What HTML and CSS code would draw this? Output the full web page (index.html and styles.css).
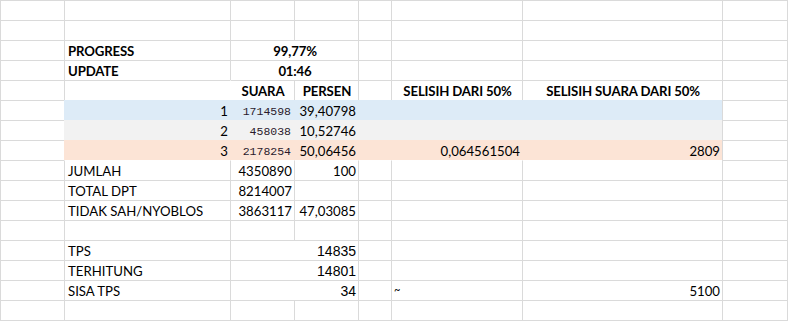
FILE: index.html
```html
<!DOCTYPE html>
<html>
<head>
<meta charset="utf-8">
<link rel="stylesheet" href="styles.css">
</head>
<body>
<div class="sheet">
  <!-- row 1 -->
  <div class="c"></div><div class="c"></div><div class="c"></div><div class="c"></div><div class="c"></div><div class="c"></div><div class="c"></div><div class="c"></div><div class="c z"></div>
  <!-- row 2 -->
  <div class="c"></div><div class="c"></div><div class="c"></div><div class="c"></div><div class="c"></div><div class="c"></div><div class="c"></div><div class="c"></div><div class="c z"></div>
  <!-- PROGRESS -->
  <div class="c"></div><div class="c b">PROGRESS</div><div class="c s2 b ctr">99,77%</div><div class="c"></div><div class="c"></div><div class="c"></div><div class="c"></div><div class="c z"></div>
  <!-- UPDATE -->
  <div class="c"></div><div class="c b">UPDATE</div><div class="c s2 b ctr">01:46</div><div class="c"></div><div class="c"></div><div class="c"></div><div class="c"></div><div class="c z"></div>
  <!-- headers -->
  <div class="c"></div><div class="c"></div><div class="c nl b ctr">SUARA</div><div class="c b ctr">PERSEN</div><div class="c"></div><div class="c b ctr">SELISIH DARI 50%</div><div class="c b ctr">SELISIH SUARA DARI 50%</div><div class="c"></div><div class="c z"></div>
  <!-- 1 -->
  <div class="c"></div><div class="c blue r">1</div><div class="c blue r mono">1714598</div><div class="c blue r">39,40798</div><div class="c blue"></div><div class="c blue"></div><div class="c blue"></div><div class="c"></div><div class="c z"></div>
  <!-- 2 -->
  <div class="c"></div><div class="c gray r">2</div><div class="c gray r mono">458038</div><div class="c gray r">10,52746</div><div class="c gray"></div><div class="c gray"></div><div class="c gray"></div><div class="c"></div><div class="c z"></div>
  <!-- 3 -->
  <div class="c"></div><div class="c peach r">3</div><div class="c peach r mono">2178254</div><div class="c peach r">50,06456</div><div class="c peach"></div><div class="c peach r">0,064561504</div><div class="c peach r">2809</div><div class="c"></div><div class="c z"></div>
  <!-- JUMLAH -->
  <div class="c"></div><div class="c nt">JUMLAH</div><div class="c nt r">4350890</div><div class="c nt r">100</div><div class="c nt"></div><div class="c nt"></div><div class="c nt"></div><div class="c"></div><div class="c z"></div>
  <!-- TOTAL DPT -->
  <div class="c"></div><div class="c">TOTAL DPT</div><div class="c r">8214007</div><div class="c"></div><div class="c"></div><div class="c"></div><div class="c"></div><div class="c"></div><div class="c z"></div>
  <!-- TIDAK SAH -->
  <div class="c"></div><div class="c">TIDAK SAH/NYOBLOS</div><div class="c r">3863117</div><div class="c r">47,03085</div><div class="c"></div><div class="c"></div><div class="c"></div><div class="c"></div><div class="c z"></div>
  <!-- empty -->
  <div class="c"></div><div class="c"></div><div class="c"></div><div class="c"></div><div class="c"></div><div class="c"></div><div class="c"></div><div class="c"></div><div class="c z"></div>
  <!-- TPS -->
  <div class="c"></div><div class="c">TPS</div><div class="c s2 r arial">14835</div><div class="c"></div><div class="c"></div><div class="c"></div><div class="c"></div><div class="c z"></div>
  <!-- TERHITUNG -->
  <div class="c"></div><div class="c">TERHITUNG</div><div class="c s2 r arial">14801</div><div class="c"></div><div class="c"></div><div class="c"></div><div class="c"></div><div class="c z"></div>
  <!-- SISA TPS -->
  <div class="c"></div><div class="c">SISA TPS</div><div class="c s2 r arial">34</div><div class="c"></div><div class="c tilde">~</div><div class="c r">5100</div><div class="c"></div><div class="c z"></div>
  <!-- empty -->
  <div class="c"></div><div class="c"></div><div class="c"></div><div class="c"></div><div class="c"></div><div class="c"></div><div class="c"></div><div class="c"></div><div class="c z"></div>
  <!-- bottom line -->
  <div class="c"></div><div class="c"></div><div class="c"></div><div class="c"></div><div class="c"></div><div class="c"></div><div class="c"></div><div class="c"></div><div class="c z"></div>
</div>
</body>
</html>
```
FILE: styles.css
```css
html, body {
  margin: 0;
  padding: 0;
  background: #ffffff;
  overflow: hidden;
}

.sheet {
  display: grid;
  grid-template-columns: 64px 166px 64px 64px 33px 131px 200px 65px 1px;
  grid-template-rows: repeat(16, 20px) 1px;
  width: 788px;
  font-family: Lato, "Liberation Sans", sans-serif;
  font-size: 13.2px;
  color: #000000;
}

.c {
  box-sizing: border-box;
  border-left: 1px solid #dadada;
  border-top: 1px solid #dadada;
  padding: 1px 2px 0 3px;
  line-height: 19px;
  white-space: nowrap;
  overflow: hidden;
  min-width: 0;
  background: #ffffff;
}

.z {
  padding: 0;
}

.s2 {
  grid-column: span 2;
}

.b {
  font-weight: 700;
  letter-spacing: -0.15px;
}

.ctr {
  text-align: center;
}

.r {
  text-align: right;
}

.nl {
  border-left-color: #ffffff;
}

.nt {
  border-top-color: #ffffff;
}

.blue {
  background: #ddebf7;
  border-color: #ddebf7;
}

.gray {
  background: #f2f2f2;
  border-color: #f2f2f2;
}

.peach {
  background: #fce4d6;
  border-color: #fce4d6;
}

.mono {
  font-family: "Liberation Mono", "DejaVu Sans Mono", monospace;
  font-size: 11.5px;
  color: #2a1a2c;
  padding-right: 3px;
}

.arial {
  font-family: "Liberation Sans", Arial, sans-serif;
  font-size: 14px;
  padding-right: 2px;
}

.tilde {
  padding-left: 2px;
  font-size: 11px;
  line-height: 15px;
}
```
